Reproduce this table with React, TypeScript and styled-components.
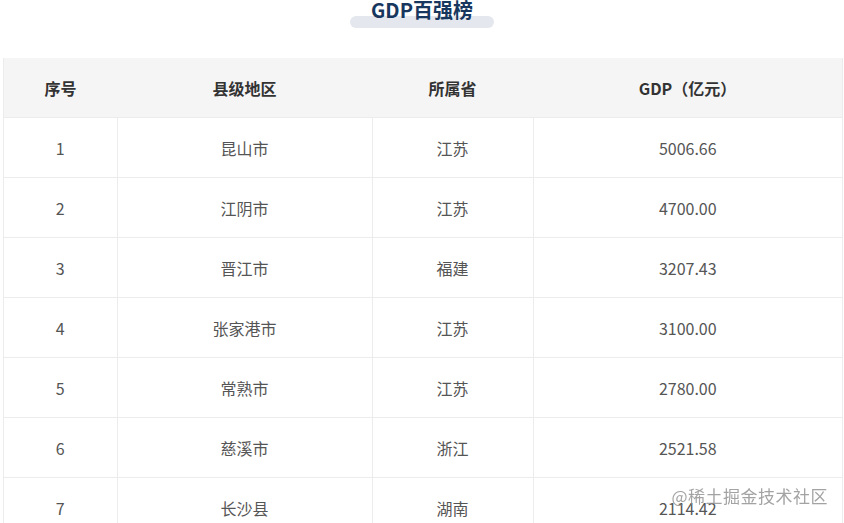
import React from 'react';
import styled, { createGlobalStyle } from 'styled-components';

interface Row {
  rank: number;
  county: string;
  province: string;
  gdp: string;
}

const rows: Row[] = [
  { rank: 1, county: '昆山市', province: '江苏', gdp: '5006.66' },
  { rank: 2, county: '江阴市', province: '江苏', gdp: '4700.00' },
  { rank: 3, county: '晋江市', province: '福建', gdp: '3207.43' },
  { rank: 4, county: '张家港市', province: '江苏', gdp: '3100.00' },
  { rank: 5, county: '常熟市', province: '江苏', gdp: '2780.00' },
  { rank: 6, county: '慈溪市', province: '浙江', gdp: '2521.58' },
  { rank: 7, county: '长沙县', province: '湖南', gdp: '2114.42' },
];

const GlobalStyle = createGlobalStyle`
  html, body {
    margin: 0;
    padding: 0;
    overflow: hidden;
    background: #fff;
  }
  body {
    font-family: "Noto Sans CJK SC", "Noto Sans", sans-serif;
  }
`;

const Page = styled.div`
  padding: 0 3px;
`;

const TitleBar = styled.div`
  height: 58px;
  display: flex;
  justify-content: center;
  align-items: flex-start;
`;

const Title = styled.h2`
  position: relative;
  z-index: 0;
  margin: 0;
  padding: 0 21px;
  font-size: 20px;
  line-height: 20px;
  font-weight: 700;
  color: #17375e;

  &::before {
    content: '';
    position: absolute;
    left: 0;
    right: 0;
    top: 16px;
    height: 12px;
    border-radius: 6px;
    background: #e4e8ee;
    z-index: -1;
  }
`;

const Table = styled.table`
  width: 838px;
  border-collapse: collapse;
  table-layout: fixed;
  border-left: 1px solid #ececec;
  border-right: 1px solid #ececec;
`;

const HeadCell = styled.th<{ w: number }>`
  width: ${(p) => p.w}px;
  height: 59px;
  padding: 0;
  background: #f5f5f5;
  color: #333;
  font-size: 16px;
  font-weight: 700;
  text-align: center;
  border-bottom: 1px solid #ececec;
`;

const Cell = styled.td`
  height: 59px;
  padding: 0;
  color: #555;
  font-size: 16px;
  text-align: center;
  border: 1px solid #ececec;
  border-top: none;

  &:first-child {
    border-left: none;
  }
  &:last-child {
    border-right: none;
  }
`;

const Watermark = styled.div`
  position: fixed;
  right: 16px;
  bottom: 15px;
  font-size: 17px;
  color: rgba(140, 140, 140, 0.8);
  letter-spacing: 0.5px;
  pointer-events: none;
`;

const App = () => {
  return (
    <>
      <GlobalStyle />
      <Page>
        <TitleBar>
          <Title>GDP百强榜</Title>
        </TitleBar>
        <Table>
          <thead>
            <tr>
              <HeadCell w={113}>序号</HeadCell>
              <HeadCell w={255}>县级地区</HeadCell>
              <HeadCell w={161}>所属省</HeadCell>
              <HeadCell w={309}>GDP（亿元）</HeadCell>
            </tr>
          </thead>
          <tbody>
            {rows.map((r) => (
              <tr key={r.rank}>
                <Cell>{r.rank}</Cell>
                <Cell>{r.county}</Cell>
                <Cell>{r.province}</Cell>
                <Cell>{r.gdp}</Cell>
              </tr>
            ))}
          </tbody>
        </Table>
      </Page>
      <Watermark>@稀土掘金技术社区</Watermark>
    </>
  );
};

export default App;
